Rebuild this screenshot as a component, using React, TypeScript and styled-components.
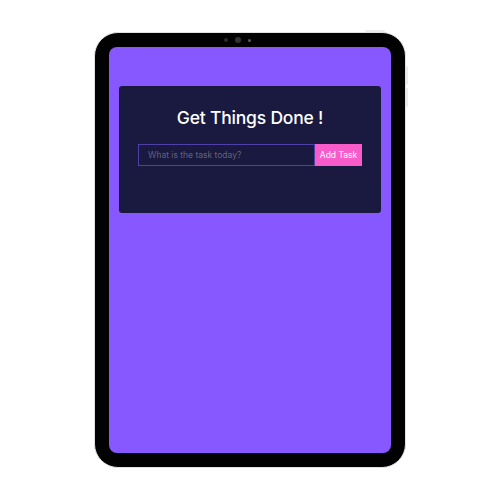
import React from "react";
import styled, { createGlobalStyle } from "styled-components";

const Global = createGlobalStyle`
  html, body { margin: 0; padding: 0; background: #ffffff; }
  body { font-family: "Inter", "Open Sans", sans-serif; }
`;

const Page = styled.div`
  width: 500px;
  height: 500px;
  display: flex;
  align-items: center;
  justify-content: center;
`;

const Tablet = styled.div`
  position: relative;
  width: 312px;
  height: 436px;
  box-sizing: border-box;
  background: #020202;
  border: 1px solid #e2e2e2;
  border-radius: 24px;
  padding: 0 14px 14px;
  display: flex;
  flex-direction: column;
`;

const SideButton = styled.div<{ $top: number; $len: number; $side: "right" | "top"; $off: number }>`
  position: absolute;
  background: #ececec;
  border-radius: 1px;
  ${(p) =>
    p.$side === "right"
      ? `right: -3px; top: ${p.$top}px; width: 2px; height: ${p.$len}px;`
      : `top: -3px; right: ${p.$off}px; height: 2px; width: ${p.$len}px;`}
`;

const CameraRow = styled.div`
  height: 14px;
  display: flex;
  align-items: center;
  justify-content: center;
  gap: 7px;
  padding-right: 26px;
`;

const Dot = styled.span<{ $size: number; $color: string }>`
  width: ${(p) => p.$size}px;
  height: ${(p) => p.$size}px;
  border-radius: 50%;
  background: ${(p) => p.$color};
`;

const Screen = styled.div`
  flex: 1;
  background: #8758ff;
  border-radius: 8px;
  padding: 39px 10px 0;
  display: flex;
  flex-direction: column;
  align-items: center;
`;

const Card = styled.div`
  width: 262px;
  height: 127px;
  box-sizing: border-box;
  background: #1a1a40;
  border-radius: 3px;
  padding-top: 19px;
  display: flex;
  flex-direction: column;
  align-items: center;
`;

const Title = styled.h1`
  margin: 0 0 13px;
  font-family: "Inter", "Open Sans", sans-serif;
  font-weight: 500;
  font-size: 17.5px;
  line-height: 26px;
  color: #ffffff;
  letter-spacing: -0.2px;
`;

const Form = styled.form`
  display: flex;
  width: 224px;
  height: 22px;
`;

const Input = styled.input`
  flex: 1;
  min-width: 0;
  box-sizing: border-box;
  height: 22px;
  background: transparent;
  border: 1px solid #4f3fa8;
  color: #fff;
  padding: 0 9px;
  font-family: "Inter", "Open Sans", sans-serif;
  font-size: 8.5px;
  outline: none;
  &::placeholder { color: rgba(255, 255, 255, 0.32); }
`;

const Button = styled.button`
  width: 47px;
  height: 22px;
  border: none;
  background: #f75cca;
  color: #ffffff;
  font-family: "Inter", "Open Sans", sans-serif;
  font-size: 8.5px;
  padding: 0;
  cursor: pointer;
`;

export default function App() {
  return (
    <Page>
      <Global />
      <Tablet>
        <SideButton $side="right" $top={33} $len={19} $off={0} />
        <SideButton $side="right" $top={55} $len={19} $off={0} />
        <SideButton $side="top" $top={0} $len={20} $off={20} />
        <CameraRow>
          <Dot $size={4} $color="#2a2a2a" />
          <Dot $size={6} $color="#333333" />
          <Dot $size={3} $color="#5a5a5a" />
        </CameraRow>
        <Screen>
          <Card>
            <Title>Get Things Done !</Title>
            <Form onSubmit={(e) => e.preventDefault()}>
              <Input placeholder="What is the task today?" />
              <Button type="submit">Add Task</Button>
            </Form>
          </Card>
        </Screen>
      </Tablet>
    </Page>
  );
}
